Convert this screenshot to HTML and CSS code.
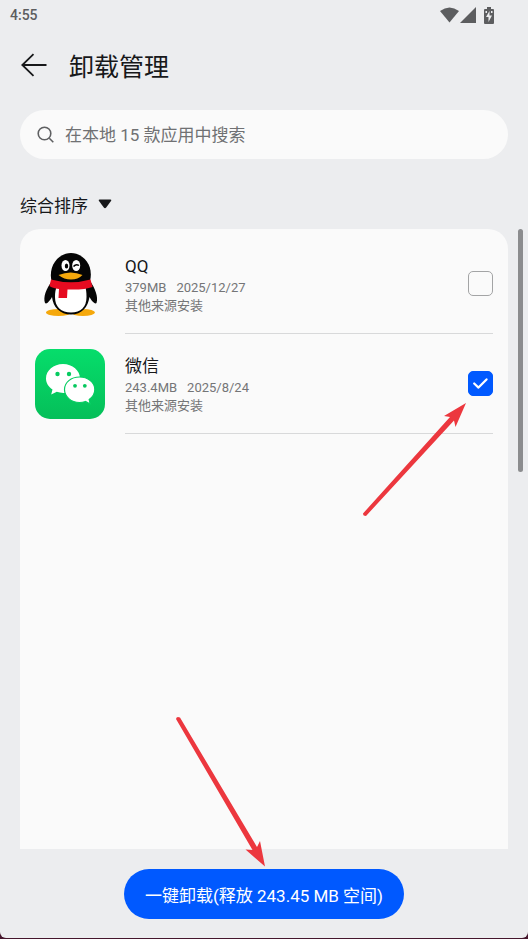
FILE: index.html
```html
<!DOCTYPE html>
<html lang="zh-CN">
<head>
    <meta charset="UTF-8">
    <meta name="viewport" content="width=device-width, initial-scale=1.0">
    <title>卸载管理</title>
    <link rel="stylesheet" href="styles.css">
</head>
<body>
    <div class="screen">
        <div class="status">
            <span>4:55</span>
            <div class="status-icons">
                <svg width="19" height="16" viewBox="0 0 19 16"><path d="M0 4 Q9.500-3 19 4 L9.500 15.500Z" fill="#5c5d5f"/></svg>
                <svg width="16" height="16" viewBox="0 0 16 16"><path d="M16 0V16H0Z" fill="#5c5d5f"/></svg>
                <svg class="battery" width="10" height="17" viewBox="0 0 10 17"><path d="M3 0H7V2H9Q10 2 10 3V16Q10 17 9 17H1Q0 17 0 16V3Q0 2 1 2H3Z" fill="#5c5d5f"/><path d="M5.500 4 2 10H4.500V15L8 8.500H5.500ZM1.500 4H3V6H1.500ZM7 4H8.500V6H7Z" fill="#ecedef"/></svg>
            </div>
        </div>

        <header class="header">
            <a class="back" href="#" aria-label="返回">
                <svg width="26" height="24" viewBox="0 0 26 24" fill="none" stroke="#17181a" stroke-width="1.800"><path d="M25.500 12H1M12.500 1.200 1.300 12 12.500 22.800"/></svg>
            </a>
            <h1>卸载管理</h1>
        </header>

        <label class="search">
            <svg width="18" height="18" viewBox="0 0 18 18" fill="none" stroke="#5f6062" stroke-width="1.600"><circle cx="7.500" cy="7.500" r="6.300"/><path d="M12.300 12.300 16.300 16.300"/></svg>
            <input type="text" aria-label="搜索应用" placeholder="在本地 15 款应用中搜索">
        </label>

        <button class="sort" type="button">
            综合排序
            <svg width="14" height="10" viewBox="0 0 14 10"><path d="M1.500 0.500H12.500Q14 0.500 13 2L8.200 8.500Q7 10 5.800 8.500L1 2Q0 0.500 1.500 0.500Z" fill="#17181a"/></svg>
        </button>

        <main class="list-area">
            <ul class="list">
                <li class="row">
                    <svg class="app-icon" viewBox="0 0 70 70">
                        <ellipse cx="23.500" cy="63.500" rx="12.500" ry="3.500" fill="#f5a80c"/>
                        <ellipse cx="48" cy="63.500" rx="12" ry="3.500" fill="#f5a80c"/>
                        <path d="M17 32C11 40 8 48 10 54C12 56 16 50 17 48C18 58 25 65.500 36 65.500S53 58 54.500 48C56 51 60 56 61.500 54C63.500 48 60 39 55 32Z" fill="#050505"/>
                        <path d="M22 37Q20 41 20 48C20 58 26 63.500 36 63.500S51.500 58 51.500 48Q51.500 41 50 37Z" fill="#fff"/>
                        <path d="M16.500 32C13 16 24 4 36 4S59 16 55 32Z" fill="#050505"/>
                        <ellipse cx="30.500" cy="16.500" rx="4" ry="5.500" fill="#fff"/>
                        <ellipse cx="41.200" cy="16.500" rx="4" ry="5.500" fill="#fff"/>
                        <ellipse cx="31.500" cy="17" rx="1.700" ry="2.500" fill="#050505"/>
                        <path d="M38.500 17.500Q41 14.500 44 16.500" fill="none" stroke="#050505" stroke-width="1.500"/>
                        <path d="M23.500 26Q36 21 47.500 26Q43 30.500 36 30.500T23.500 26Z" fill="#f5a80c"/>
                        <path d="M16 30.500Q36 36 55.500 30.500L57.500 38Q50 41 32.500 40.500L32 49H23.500L24 40Q17 39 14.500 37Z" fill="#e60b20"/>
                    </svg>
                    <div class="content">
                        <label class="info" for="qq">
                            <span class="name">QQ</span>
                            <span class="meta"><span>379MB</span><span>2025/12/27</span></span>
                            <span class="source">其他来源安装</span>
                        </label>
                        <input class="check" type="checkbox" id="qq">
                    </div>
                </li>
                <li class="row">
                    <svg class="app-icon" viewBox="0 0 70 70">
                        <defs>
                            <linearGradient id="green" x1="0" y1="0" x2="0" y2="1"><stop offset="0" stop-color="#06dd6b"/><stop offset="1" stop-color="#05bf59"/></linearGradient>
                        </defs>
                        <rect width="70" height="70" rx="15" fill="url(#green)"/>
                        <path d="M28 15C18.500 15 11 21.500 11 29.500C11 34 13.500 37.800 17.500 40.500L16.200 45.500L21.800 42.800Q25 44 29 43.900C37.500 43.500 45 37.500 45 29.500S37.500 15 28 15Z" fill="#fff"/>
                        <circle cx="22.500" cy="25" r="2.200" fill="#06cb60"/>
                        <circle cx="34" cy="25" r="2.200" fill="#06cb60"/>
                        <path d="M44.500 28C36 28 29.500 33.500 29.500 40.500S36 53.500 44.500 53.500Q47.500 53.500 50.500 52.500L55.200 55L54.200 50.500C57.500 48.200 59.800 44.500 59.800 40.500C59.800 33.500 53 28 44.500 28Z" fill="#fff" stroke="#06cd61" stroke-width="1.200"/>
                        <circle cx="40" cy="36.800" r="1.900" fill="#06c85e"/>
                        <circle cx="49.800" cy="36.800" r="1.900" fill="#06c85e"/>
                    </svg>
                    <div class="content">
                        <label class="info" for="wechat">
                            <span class="name">微信</span>
                            <span class="meta"><span>243.4MB</span><span>2025/8/24</span></span>
                            <span class="source">其他来源安装</span>
                        </label>
                        <span class="check-box">
                            <input class="check" type="checkbox" id="wechat" checked>
                            <svg class="tick" width="15" height="11" viewBox="0 0 15 11" fill="none" stroke="#fff" stroke-width="2.200" stroke-linecap="round" stroke-linejoin="round"><path d="M1.200 5.500 5.500 9.600 13.500 1.400"/></svg>
                        </span>
                    </div>
                </li>
            </ul>
            <div class="scrollbar"></div>
            <svg class="arrow arrow-check" width="104" height="114" viewBox="0 0 104 114" fill="#ec373e">
                <path d="M0 111.500 87 15 81 14 103 1 92.500 25 91 18.500 3 114Q0 114 0 111.500Z"/>
            </svg>
        </main>

        <footer class="footer">
            <button class="uninstall" type="button">一键卸载(释放 243.45 MB 空间)</button>
            <svg class="arrow arrow-button" width="90" height="152" viewBox="0 0 90 152" fill="#ec373e">
                <path d="M0 3Q0.500 0 4 1.500L81 131 84 125 89 150.500 69.500 133.500 76.500 134Z"/>
            </svg>
        </footer>
    </div>
</body>
</html>
```

FILE: styles.css
```css
* {
    box-sizing: border-box;
}

body {
    margin: 0;
    background: #45162c;
    color: #17181a;
    font-family: Roboto, "Noto Sans CJK SC", sans-serif;
    font-size: 17px;
}

.screen {
    display: flex;
    flex-direction: column;
    min-height: calc(100vh - 1px);
    padding: 0 20px;
    background: #ecedef;
    border-radius: 0 0 6px 6px;
}

svg {
    display: block;
    flex-shrink: 0;
}

/* Status bar */
.status {
    display: flex;
    justify-content: space-between;
    align-items: center;
    height: 30px;
    margin: 0 14px 0 -10px;
    color: #5c5d5f;
    font-size: 14px;
    font-weight: 500;
}

.status-icons {
    display: flex;
    align-items: center;
    gap: 1px;
}

.battery {
    margin-left: 7px;
}

/* Title */
.header {
    display: flex;
    align-items: center;
    gap: 22px;
    height: 69px;
    padding-left: 1px;
}

h1 {
    margin: 0;
    font-size: 25px;
    font-weight: 400;
}

/* Search box */
.search {
    display: flex;
    align-items: center;
    gap: 10px;
    height: 49px;
    margin-top: 11px;
    padding: 0 17px;
    background: #fafafa;
    border-radius: 25px;
}

.search input {
    flex: 1;
    min-width: 0;
    padding: 0;
    border: none;
    outline: none;
    background: none;
    color: #17181a;
    font: inherit;
}

.search input::placeholder {
    color: #707173;
}

.sort {
    display: flex;
    align-items: center;
    align-self: flex-start;
    gap: 10px;
    height: 50px;
    margin-top: 20px;
    padding: 0;
    border: none;
    background: none;
    color: inherit;
    font: inherit;
    cursor: pointer;
}

/* App list */
.list-area {
    position: relative;
    display: flex;
    flex: 1;
}

.list {
    flex: 1;
    margin: 0;
    padding: 5px 15px;
    background: #fafafa;
    border-radius: 20px 20px 0 0;
    list-style: none;
}

.row {
    display: flex;
    align-items: center;
    gap: 20px;
    height: 100px;
}

.app-icon {
    width: 70px;
    height: 70px;
}

.content {
    display: flex;
    flex: 1;
    align-items: center;
    justify-content: space-between;
    height: 100%;
    border-bottom: 1px solid #d8d9da;
}

.info {
    display: flex;
    flex-direction: column;
    color: #747577;
    font-size: 13px;
    line-height: 18px;
}

.name {
    color: #17181a;
    font-size: 17px;
    line-height: 26px;
}

.meta {
    display: flex;
    gap: 10px;
}

.check-box {
    display: grid;
    place-items: center;
}

.check-box > * {
    grid-area: 1 / 1;
}

.check {
    appearance: none;
    width: 25px;
    height: 25px;
    margin: 0;
    border: 1px solid #a3a4a5;
    border-radius: 5px;
    cursor: pointer;
}

.check:checked {
    border-color: #0059ff;
    background: #0059ff;
}

.tick {
    visibility: hidden;
    pointer-events: none;
}

.check:checked + .tick {
    visibility: visible;
}

.scrollbar {
    position: absolute;
    top: 0;
    right: -15px;
    width: 5px;
    height: 243px;
    background: #8b8c8e;
    border-radius: 3px;
}

/* Bottom action */
.footer {
    position: relative;
    display: flex;
    justify-content: center;
    padding: 20px 0 19px;
}

.uninstall {
    height: 50px;
    padding: 0 21px;
    border: none;
    border-radius: 25px;
    background: #0059ff;
    color: #fff;
    font: inherit;
    cursor: pointer;
}

/* Pointer arrows */
.arrow {
    position: absolute;
    pointer-events: none;
}

.arrow-check {
    top: 173px;
    right: 41px;
}

.arrow-button {
    right: calc(50% - 2px);
    bottom: 70px;
}
```
